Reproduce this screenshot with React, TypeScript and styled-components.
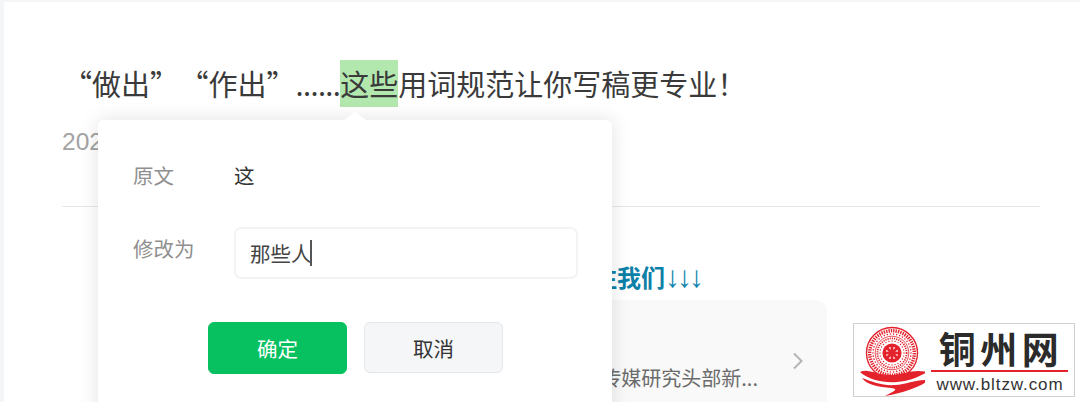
import React from "react";
import styled, { createGlobalStyle } from "styled-components";

const Global = createGlobalStyle`
  html, body { margin: 0; padding: 0; height: 100%; overflow: hidden; background: #f4f5f7; }
  #root { height: 100%; }
  * { box-sizing: border-box; }
  body { font-family: "Noto Sans CJK SC", "Liberation Sans", sans-serif; }
`;

const Viewport = styled.div`
  position: relative;
  width: 1080px;
  height: 402px;
  padding: 2px 0 0 4px;
  overflow: hidden;
`;

const Article = styled.main`
  height: 400px;
  background: #fff;
  padding: 56px 40px 0 58px;
  overflow: hidden;
`;

const Title = styled.h1`
  margin: 0;
  padding-left: 1px;
  font-size: 29px;
  line-height: 50px;
  font-weight: 400;
  color: #3a3a3a;
  white-space: nowrap;
  word-spacing: -6px;
`;

const Dots = styled.span`
  letter-spacing: -0.6px;
`;

const Mark = styled.span`
  display: inline-block;
  height: 49px;
  background: linear-gradient(transparent 2px, #b2e8ae 2px);
`;

const DateLine = styled.div`
  margin-top: 18px;
  font-family: "Liberation Sans", sans-serif;
  font-size: 24.5px;
  line-height: 32px;
  color: #a3a3a3;
`;

const Divider = styled.hr`
  margin: 48px 0 0;
  border: 0;
  border-top: 1px solid #e8e8e8;
`;

const FollowHeading = styled.div`
  height: 30px;
  margin-top: 55px;
  text-align: center;
  font-size: 24px;
  line-height: 30px;
  font-weight: 700;
  color: #0d80a8;
  white-space: nowrap;
`;

const Arrows = styled.span`
  font-family: "Liberation Sans", sans-serif;
  font-size: 30px;
  line-height: 1;
  letter-spacing: -3px;
  font-weight: 700;
  color: #0f85ad;
`;

const ProfileCard = styled.div`
  display: flex;
  justify-content: flex-end;
  align-items: flex-start;
  gap: 34px;
  width: 552px;
  height: 120px;
  margin: 8px 0 0 213px;
  padding: 52px 23px 0 0;
  background: #f9f9f9;
  border-radius: 12px;
`;

const ProfileText = styled.div`
  margin-top: 14px;
  font-size: 20px;
  line-height: 24px;
  color: #6b6b6b;
  white-space: nowrap;
`;

const Popover = styled.section`
  position: absolute;
  left: 98px;
  top: 120px;
  width: 514px;
  height: 300px;
  padding: 34px 34px 0 35px;
  background: #fff;
  border-radius: 6px;
  box-shadow: 0 0 20px rgba(0, 0, 0, 0.12);
  &::before {
    content: "";
    position: absolute;
    left: 246px;
    top: -8px;
    width: 0;
    height: 0;
    border-left: 11px solid transparent;
    border-right: 11px solid transparent;
    border-bottom: 8px solid #fff;
  }
`;

const FieldRow = styled.div<{ $top?: number }>`
  display: grid;
  grid-template-columns: 101px 1fr;
  align-items: start;
  margin-top: ${(p) => p.$top ?? 0}px;
`;

const FieldLabel = styled.div`
  font-size: 20.5px;
  line-height: 42px;
  color: #8f8f8f;
`;

const FieldValue = styled.div`
  font-size: 20.5px;
  line-height: 42px;
  color: #333;
`;

const TextBox = styled.div`
  display: flex;
  align-items: center;
  height: 52px;
  padding: 0 14px;
  border: 2px solid #f3f3f3;
  border-radius: 7px;
  font-size: 20.5px;
  color: #444;
`;

const Caret = styled.span`
  display: inline-block;
  width: 2px;
  height: 26px;
  margin-left: -2px;
  background: #555;
`;

const Actions = styled.div`
  display: flex;
  align-items: flex-start;
  gap: 17px;
  margin: 43px 0 0 75px;
`;

const Button = styled.button<{ $primary?: boolean }>`
  width: 139px;
  height: ${(p) => (p.$primary ? 52 : 51)}px;
  padding: 0;
  border: 1px solid ${(p) => (p.$primary ? "#07c160" : "#e5e7ea")};
  border-radius: 6px;
  background: ${(p) => (p.$primary ? "#07c160" : "#f5f6f8")};
  color: ${(p) => (p.$primary ? "#fff" : "#333")};
  font-family: inherit;
  font-size: 20.5px;
`;

const Logo = styled.aside`
  position: absolute;
  left: 853px;
  top: 323px;
  width: 222px;
  height: 74px;
  display: flex;
  padding: 2px 6px 0 5px;
  background: #fff;
  border: 1px solid #cfcfcf;
`;

const LogoText = styled.div`
  flex: 1;
  display: flex;
  flex-direction: column;
  align-items: stretch;
  margin-left: 6px;
`;

const LogoName = styled.div`
  height: 47px;
  padding-left: 3px;
  text-align: center;
  font-size: 37px;
  line-height: 44px;
  font-weight: 700;
  letter-spacing: 4.5px;
  color: #2b2b2b;
  white-space: nowrap;
`;

const LogoRule = styled.div`
  height: 3px;
  background: #e4222c;
`;

const LogoUrl = styled.div`
  padding-top: 2px;
  padding-left: 1px;
  text-align: center;
  font-family: "Liberation Sans", sans-serif;
  font-size: 17px;
  line-height: 22px;
  letter-spacing: 0.9px;
  color: #333;
  white-space: nowrap;
`;

const Seal = () => {
  const ring = (n: number, r: number, s: number) =>
    Array.from({ length: n }, (_, i) => {
      const a = (i / n) * Math.PI * 2;
      return <circle key={`${r}-${i}`} cx={33 + r * Math.cos(a)} cy={27 + r * Math.sin(a)} r={s} fill="#e4222c" />;
    });
  const spokes = Array.from({ length: 8 }, (_, i) => (
    <rect key={i} x={31.6} y={18.5} width={2.8} height={7} fill="#e4222c" transform={`rotate(${i * 45} 33 27)`} />
  ));
  return (
    <svg width="66" height="70" viewBox="0 0 66 70" aria-hidden="true">
      <circle cx="33" cy="27" r="25.5" fill="#fff" stroke="#e4222c" strokeWidth="1.4" />
      <circle cx="33" cy="27" r="22.3" fill="none" stroke="#e4222c" strokeWidth="3.4" strokeDasharray="1.4 1" />
      {ring(38, 19, 0.8)}
      <circle cx="33" cy="27" r="16.8" fill="none" stroke="#e4222c" strokeWidth="0.8" />
      <circle cx="33" cy="27" r="14.6" fill="none" stroke="#e4222c" strokeWidth="1.8" strokeDasharray="1.2 1" />
      {ring(24, 12, 0.7)}
      <circle cx="33" cy="27" r="9.6" fill="#e4222c" />
      <circle cx="33" cy="27" r="6.2" fill="#fff" />
      {spokes}
      <circle cx="33" cy="27" r="3.2" fill="#e4222c" />
      <path d="M1 46 C10 42 18 50 34 49 C46 48 54 43 68 46 C60 51 50 55 38 56 C24 57 10 54 1 46Z" fill="#e4222c" />
      <path d="M3 52 C14 56 24 60 36 59 C48 58 58 53 70 54 C62 60 48 66 26 70 C36 65 40 63 32 62 C20 61 8 59 3 52Z" fill="#e4222c" />
    </svg>
  );
};

const Chevron = () => (
  <svg width="12" height="18" viewBox="0 0 12 18" fill="none" aria-hidden="true">
    <path d="M2 1.5 L9.5 9 L2 16.5" stroke="#b5b5b5" strokeWidth="2" />
  </svg>
);

export default function App() {
  return (
    <Viewport>
      <Global />
      <Article>
        <Title>
          “做出” “作出”<Dots>......</Dots>
          <Mark>这些</Mark>用词规范让你写稿更专业！
        </Title>
        <DateLine>2022-03-18</DateLine>
        <Divider />
        <FollowHeading>
          点击下方名片并关注我们<Arrows>↓↓↓</Arrows>
        </FollowHeading>
        <ProfileCard>
          <ProfileText>传媒研究头部新...</ProfileText>
          <Chevron />
        </ProfileCard>
      </Article>
      <Popover>
        <FieldRow>
          <FieldLabel>原文</FieldLabel>
          <FieldValue>这</FieldValue>
        </FieldRow>
        <FieldRow $top={31}>
          <FieldLabel>修改为</FieldLabel>
          <TextBox>
            那些人
            <Caret />
          </TextBox>
        </FieldRow>
        <Actions>
          <Button $primary>确定</Button>
          <Button>取消</Button>
        </Actions>
      </Popover>
      <Logo>
        <Seal />
        <LogoText>
          <LogoName>铜州网</LogoName>
          <LogoRule />
          <LogoUrl>www.bltzw.com</LogoUrl>
        </LogoText>
      </Logo>
    </Viewport>
  );
}
